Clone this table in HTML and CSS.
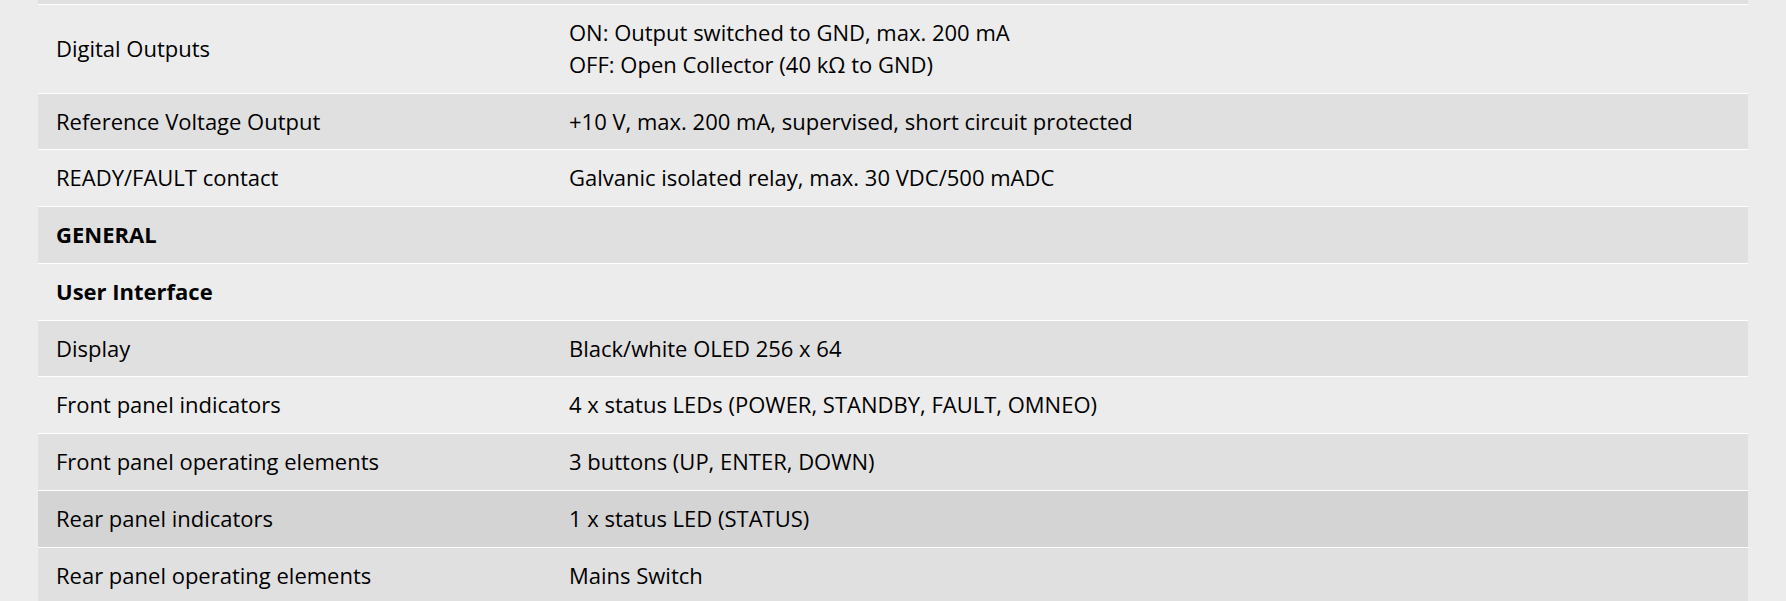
FILE: index.html
```html
<!DOCTYPE html>
<html lang="en">
<head>
<meta charset="utf-8">
<title>Specifications</title>
<link rel="stylesheet" href="styles.css">
</head>
<body>
<div class="page">
  <div class="specs">
    <div class="row row-dark row-cut"></div>
    <div class="row">
      <div class="cell">Digital Outputs</div>
      <div class="cell">ON: Output switched to GND, max. 200 mA<br>OFF: Open Collector (40 kΩ to GND)</div>
    </div>
    <div class="row row-dark">
      <div class="cell">Reference Voltage Output</div>
      <div class="cell">+10 V, max. 200 mA, supervised, short circuit protected</div>
    </div>
    <div class="row">
      <div class="cell">READY/FAULT contact</div>
      <div class="cell">Galvanic isolated relay, max. 30 VDC/500 mADC</div>
    </div>
    <div class="row row-dark">
      <div class="cell cell-head">GENERAL</div>
      <div class="cell"></div>
    </div>
    <div class="row">
      <div class="cell cell-head">User Interface</div>
      <div class="cell"></div>
    </div>
    <div class="row row-dark">
      <div class="cell">Display</div>
      <div class="cell">Black/white OLED 256 x 64</div>
    </div>
    <div class="row">
      <div class="cell">Front panel indicators</div>
      <div class="cell">4 x status LEDs (POWER, STANDBY, FAULT, OMNEO)</div>
    </div>
    <div class="row row-dark">
      <div class="cell">Front panel operating elements</div>
      <div class="cell">3 buttons (UP, ENTER, DOWN)</div>
    </div>
    <div class="row row-hover">
      <div class="cell">Rear panel indicators</div>
      <div class="cell">1 x status LED (STATUS)</div>
    </div>
    <div class="row row-dark">
      <div class="cell">Rear panel operating elements</div>
      <div class="cell">Mains Switch</div>
    </div>
  </div>
</div>
</body>
</html>
```
FILE: styles.css
```css
html, body {
  margin: 0;
  padding: 0;
  background: #ececec;
  overflow: hidden;
}
body {
  font-family: "Open Sans", "Noto Sans", Arial, sans-serif;
  font-size: 22px;
  line-height: 31.75px;
  color: #000;
}
.page {
  padding: 0 38px;
}
.specs {
  display: flex;
  flex-direction: column;
}
.row {
  display: grid;
  grid-template-columns: 30% 70%;
  align-items: center;
  border-top: 1px solid #fff;
}
.row-cut {
  height: 4px;
  border-top: 0;
}
.row-dark {
  background: #e0e0e0;
}
.row-hover {
  background: #d4d4d4;
}
.cell {
  padding: 12px 18px;
  min-height: 31.75px;
}
.cell-head {
  font-weight: 700;
}
```
